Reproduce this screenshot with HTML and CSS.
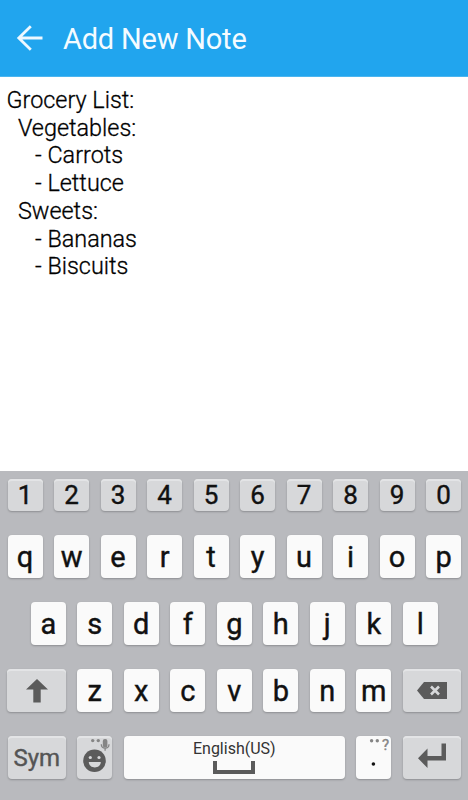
FILE: index.html
```html
<!DOCTYPE html>
<html lang="en">
<head>
<meta charset="utf-8">
<title>Add New Note</title>
<link rel="stylesheet" href="styles.css">
</head>
<body>
<header class="bar">
  <svg class="back" width="28" height="28" viewBox="0 0 28 28"><path d="M26.5 14H3M14.8 2.2L2.8 14l12 11.8"/></svg>
  <h1>Add New Note</h1>
</header>
<main class="note">Grocery List:
  Vegetables:
     - Carrots
     - Lettuce
  Sweets:
     - Bananas
     - Biscuits</main>
<section class="keyboard">
  <div class="row digits"><b>1</b><b>2</b><b>3</b><b>4</b><b>5</b><b>6</b><b>7</b><b>8</b><b>9</b><b>0</b></div>
  <div class="row"><b>q</b><b>w</b><b>e</b><b>r</b><b>t</b><b>y</b><b>u</b><b>i</b><b>o</b><b>p</b></div>
  <div class="row"><b>a</b><b>s</b><b>d</b><b>f</b><b>g</b><b>h</b><b>j</b><b>k</b><b>l</b></div>
  <div class="row">
    <b class="grey wide"><svg width="58" height="43" viewBox="0 0 58 43"><path d="M29 10L40 20.5H32.7V33.5H25.3V20.5H18Z"/></svg></b>
    <b>z</b><b>x</b><b>c</b><b>v</b><b>b</b><b>n</b><b>m</b>
    <b class="grey wide"><svg width="58" height="43" viewBox="0 0 58 43"><path d="M14 21.5L21 13H44V30H21Z"/><path class="cross" d="M28 17.5l8 8M36 17.5l-8 8"/></svg></b>
  </div>
  <div class="row">
    <b class="grey wide sym">Sym</b>
    <b class="grey"><svg width="35" height="43" viewBox="0 0 35 43"><circle cx="17.5" cy="24.8" r="11.3"/><g class="cut"><circle cx="13.3" cy="21.5" r="1.6"/><circle cx="22" cy="21.5" r="1.6"/><path d="M11.8 26H23.8C23.8 33.2 11.8 33.2 11.8 26Z"/></g><g class="hint"><circle cx="15.7" cy="4.6" r="1.7"/><circle cx="21.3" cy="4.6" r="1.7"/><rect x="25.8" y="3" width="4.6" height="8.4" rx="2"/><path class="stand" d="M24.3 8.3C24.3 13.4 32 13.4 32 8.3M28.1 12v2.8"/></g></svg></b>
    <b class="space"><span>English(US)</span><i></i></b>
    <b class="dot"><svg width="35" height="43" viewBox="0 0 35 43"><g class="hint"><circle cx="15.6" cy="4.8" r="1.7"/><circle cx="21.3" cy="4.8" r="1.7"/></g><circle class="period" cx="17.4" cy="28" r="1.8"/></svg><span class="question">?</span></b>
    <b class="grey wide"><svg width="58" height="43" viewBox="0 0 58 43"><path d="M15 22.3L24.5 12.5V20H38.5V7.5H43V24.5H24.5V32Z"/></svg></b>
  </div>
</section>
</body>
</html>
```
FILE: styles.css
```css
* { box-sizing: border-box; }
body {
  margin: 0;
  height: 800px;
  display: flex;
  flex-direction: column;
  overflow: hidden;
  background: #fff;
  font-family: Roboto, sans-serif;
}
.bar {
  height: 77px;
  display: flex;
  align-items: center;
  padding-left: 16px;
  background: #21a5ee;
  border-bottom: 1px solid #4bb5ef;
}
.back { fill: none; stroke: #edf8ff; stroke-width: 2.8; }
h1 {
  margin: 2px 0 0 19px;
  color: #f4fbff;
  font-size: 29px;
  font-weight: 400;
  letter-spacing: -0.2px;
  line-height: 34px;
}
.note {
  flex: 1;
  padding: 10px 6.5px 0;
  white-space: pre;
  color: #000;
  font-size: 23.4px;
  font-weight: 300;
  line-height: 27.7px;
  -webkit-text-stroke: 0.3px #000;
}
.keyboard {
  height: 329px;
  padding: 8px 7px 0 7.6px;
  display: flex;
  flex-direction: column;
  gap: 24px;
  background: #b9babe;
}
.row { display: flex; justify-content: center; gap: 11.5px; height: 43px; }
.row b {
  position: relative;
  width: 35px;
  height: 43px;
  flex: none;
  display: flex;
  align-items: center;
  justify-content: center;
  border-radius: 4px;
  background: #fafafa;
  box-shadow: 0 1px 2px #8c8d91;
  color: #111;
  font-size: 29px;
  font-weight: 400;
  line-height: 40px;
  -webkit-text-stroke: 0.4px;
}
.row.digits { height: 32px; }
.digits b { height: 32px; font-size: 26px; line-height: 32px; }
.row .grey, .digits b { background: #d7d8da; box-shadow: inset 0 2px #e3e4e6, 0 1px 2px #8c8d91; }
.row .wide { width: 58.4px; }
.row .sym { font-size: 24px; color: #555; }
.row .space { flex: 1; flex-direction: column; justify-content: flex-start; -webkit-text-stroke: 0; }
.space span { margin-top: 4px; font-size: 16px; line-height: 18px; color: #333; }
.space i { width: 42px; height: 13px; margin-top: 3px; border: 4px solid #5b5b5b; border-top: 0; }
.row svg { flex: none; fill: #5b5b5b; }
.cross { stroke: #d7d8da; stroke-width: 2.6; }
.row .cut { fill: #d7d8da; }
.row .hint { fill: #858585; }
.stand { fill: none; stroke: #858585; stroke-width: 1.3; }
.period { fill: #111; }
.question { position: absolute; right: 2px; top: 0; font-size: 15px; line-height: 18px; color: #858585; }
```
